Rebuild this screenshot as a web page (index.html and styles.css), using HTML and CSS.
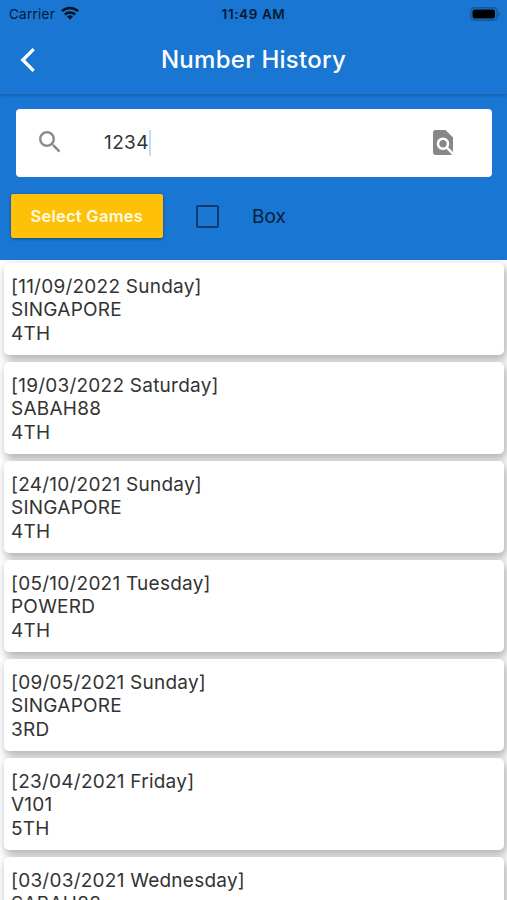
FILE: index.html
```html
<!DOCTYPE html>
<html lang="en">
<head>
<meta charset="utf-8">
<title>Number History</title>
<link rel="stylesheet" href="styles.css">
</head>
<body>
<header class="appbar">
  <div class="status">
    <div class="carrier"><span>Carrier</span>
      <svg class="wifi" viewBox="0 0 18 14"><g fill="none" stroke="#031321" stroke-width="2.5"><path d="M.9 5.2a11.6 11.6 0 0 1 16.2 0"/><path d="M3.9 8.5a7.3 7.3 0 0 1 10.2 0"/></g><path fill="#031321" d="M6 10.6a4.3 4.3 0 0 1 6 0L9 13.8z"/></svg>
    </div>
    <div class="time">11:49 AM</div>
    <svg class="battery" viewBox="0 0 31 14"><rect x=".7" y=".7" width="26.6" height="12.6" rx="4" fill="none" stroke="#135796" stroke-width="1.4"/><rect x="2.5" y="2.5" width="22.5" height="9" rx="2.2" fill="#000"/><path d="M28.6 5v4q1.6-.6 1.6-2t-1.6-2z" fill="#135796"/></svg>
  </div>
  <div class="titlebar">
    <svg class="back" viewBox="0 0 16 26"><path d="M13.7 2.2 2.8 13l10.9 10.8" fill="none" stroke="#fff" stroke-width="3.3"/></svg>
    <h1>Number History</h1>
  </div>
</header>
<section class="filters">
  <div class="search">
    <svg class="lens" viewBox="3 3 17.5 17.5"><path fill="#8b8b8b" d="M15.5 14h-.79l-.28-.27A6.47 6.47 0 0 0 16 9.5 6.5 6.5 0 1 0 9.5 16c1.61 0 3.09-.59 4.23-1.57l.27.28v.79l5 4.99L20.49 19l-4.99-5zm-6 0C7.01 14 5 11.99 5 9.5S7.01 5 9.5 5 14 7.01 14 9.5 11.99 14 9.5 14z"/></svg>
    <span class="query">1234</span><i class="caret"></i>
    <svg class="find" viewBox="4 2 16 20"><path fill="#878787" d="M20 19.59V8l-6-6H6c-1.100 0-1.990.9-1.990 2L4 20c0 1.100.89 2 1.990 2H18c.45 0 .85-.15 1.190-.4l-4.430-4.430c-.8.52-1.740.83-2.760.83-2.760 0-5-2.240-5-5s2.240-5 5-5 5 2.240 5 5c0 1.020-.31 1.960-.83 2.750L20 19.590zM9 13c0 1.660 1.340 3 3 3s3-1.340 3-3-1.340-3-3-3-3 1.340-3 3z"/></svg>
  </div>
  <div class="options">
    <button class="select">Select Games</button>
    <span class="check"></span>
    <span class="box">Box</span>
  </div>
</section>
<main class="results">
  <article class="card"><p>[11/09/2022 Sunday]</p><p>SINGAPORE</p><p>4TH</p></article>
  <article class="card"><p>[19/03/2022 Saturday]</p><p>SABAH88</p><p>4TH</p></article>
  <article class="card"><p>[24/10/2021 Sunday]</p><p>SINGAPORE</p><p>4TH</p></article>
  <article class="card"><p>[05/10/2021 Tuesday]</p><p>POWERD</p><p>4TH</p></article>
  <article class="card"><p>[09/05/2021 Sunday]</p><p>SINGAPORE</p><p>3RD</p></article>
  <article class="card"><p>[23/04/2021 Friday]</p><p>V101</p><p>5TH</p></article>
  <article class="card"><p>[03/03/2021 Wednesday]</p><p>SABAH88</p></article>
</main>
</body>
</html>
```
FILE: styles.css
```css
* { box-sizing: border-box; }
body {
  margin: 0;
  height: 900px;
  overflow: hidden;
  display: flex;
  flex-direction: column;
  background: #fff;
  font-family: Inter, "Liberation Sans", sans-serif;
  color: #333;
}
svg { display: block; flex: none; }
p, h1 { margin: 0; }
.appbar {
  height: 94px;
  flex: none;
  background: #1976d2;
  box-shadow: 0 1px 3px rgba(0, 0, 0, .25);
  z-index: 1;
}
.status {
  height: 28px;
  padding: 0 5px 0 9px;
  display: grid;
  grid-template-columns: 1fr auto 1fr;
  align-items: center;
  font-size: 13.5px;
  color: #031a30;
}
.carrier { display: flex; align-items: center; gap: 6px; letter-spacing: .25px; }
.wifi { width: 18px; height: 14px; margin-top: -2px; }
.time { font-weight: 600; letter-spacing: .6px; margin-right: 4px; }
.battery { width: 31px; height: 14px; justify-self: end; margin-right: 1px; margin-top: -1px; }
.titlebar {
  height: 63px;
  display: grid;
  grid-template-columns: 1fr auto 1fr;
  align-items: center;
  padding: 0 20px;
}
.back { width: 16px; height: 26px; }
h1 { font-size: 24px; font-weight: 500; letter-spacing: .28px; color: #fff; }
.filters {
  height: 166px;
  flex: none;
  padding: 14.5px 15px 0 10.5px;
  background: #1976d2;
  position: relative;
}
.search {
  height: 68.5px;
  margin-left: 5px;
  padding: 0 39px 0 23px;
  display: flex;
  align-items: center;
  background: #fff;
  border-radius: 4px;
}
.lens { width: 21.5px; height: 21.5px; margin-top: -2px; }
.query { margin-left: 44px; font-size: 19px; letter-spacing: .4px; }
.caret { width: 2px; height: 26px; background: #bbdefb; }
.find { width: 20px; height: 25px; margin-left: auto; }
.options { margin-top: 17px; display: flex; align-items: center; }
.select {
  width: 152.5px;
  height: 44px;
  padding: 0;
  border: 0;
  border-radius: 2px;
  background: #ffc107;
  box-shadow: 0 1px 3px rgba(0, 0, 0, .4);
  color: #fffbe0;
  font: 600 16.5px Inter, sans-serif;
  letter-spacing: .25px;
}
.check { width: 23px; height: 23px; margin-left: 33px; border: 2.5px solid #0b3d70; border-radius: 2px; }
.box { margin-left: 33px; font-size: 19px; color: #06213d; }
.results {
  padding: 3px 3px 0 4px;
  display: flex;
  flex-direction: column;
  gap: 7px;
}
.card {
  height: 92px;
  flex: none;
  padding: 12px 7px;
  background: #fff;
  border-radius: 5px;
  box-shadow: 2px 4px 8px 1px rgba(0, 0, 0, .3);
  font-size: 19px;
  letter-spacing: .24px;
  line-height: 23.3px;
}
```
